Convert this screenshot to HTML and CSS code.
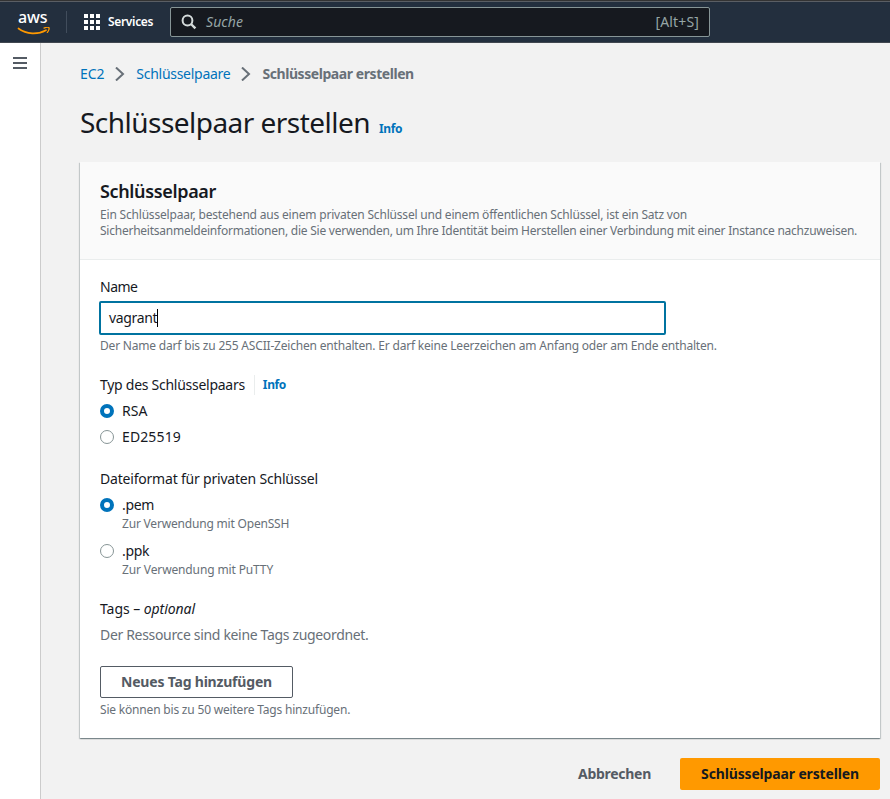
FILE: index.html
```
<!DOCTYPE html>
<html lang="de">
<head>
<meta charset="utf-8">
<title>Schlüsselpaar erstellen</title>
<link rel="stylesheet" href="styles.css">
</head>
<body>
<header class="topbar">
  <div class="logo">
    <span class="logo-text">aws</span>
    <svg viewBox="0 0 34 8" width="34" height="8" fill="none" stroke="#f90" stroke-linecap="round" stroke-linejoin="round">
      <path d="M1.500 1.500c8 6 19.500 6.200 27.500 1.700" stroke-width="1.700"/>
      <path d="M27 1.100c2-.8 4.600-.9 5-.3.400.8-.3 3.300-1.700 4.600" stroke-width="1.300"/>
    </svg>
  </div>
  <span class="divider"></span>
  <svg class="grid" viewBox="0 0 16 16" width="16" height="16" fill="#fff">
    <path d="M0 0h4v4H0zM6 0h4v4H6zM12 0h4v4h-4zM0 6h4v4H0zM6 6h4v4H6zM12 6h4v4h-4zM0 12h4v4H0zM6 12h4v4H6zM12 12h4v4h-4z"/>
  </svg>
  <span class="services">Services</span>
  <div class="search">
    <svg viewBox="0 0 16 16" width="16" height="16" fill="none" stroke="#d5dbdb">
      <circle cx="6.500" cy="6.500" r="4.900" stroke-width="2"/>
      <path d="M10 10l4.400 4.400" stroke-width="2.400"/>
    </svg>
    <em>Suche</em>
    <span class="shortcut">[Alt+S]</span>
  </div>
</header>
<div class="layout">
  <nav class="side">
    <svg viewBox="0 0 14 12" width="14" height="12" fill="#545b64"><path d="M0 0h14v2H0zM0 5h14v2H0zM0 10h14v2H0z"/></svg>
  </nav>
  <main class="content">
    <div class="crumbs">
      <a class="crumb-root">EC2</a>
      <svg viewBox="0 0 10 14" width="10" height="14"><path d="M1 .5l7 6.500-7 6.500"/></svg>
      <a class="crumb-parent">Schlüsselpaare</a>
      <svg viewBox="0 0 10 14" width="10" height="14"><path d="M1 .5l7 6.500-7 6.500"/></svg>
      <b>Schlüsselpaar erstellen</b>
    </div>
    <div class="title">
      <h1>Schlüsselpaar erstellen</h1>
      <a class="info">Info</a>
    </div>
    <section class="card">
      <div class="card-head">
        <h2>Schlüsselpaar</h2>
        <p class="small">Ein Schlüsselpaar, bestehend aus einem privaten Schlüssel und einem öffentlichen Schlüssel, ist ein Satz von</p>
        <p class="small desc-long">Sicherheitsanmeldeinformationen, die Sie verwenden, um Ihre Identität beim Herstellen einer Verbindung mit einer Instance nachzuweisen.</p>
      </div>
      <div class="card-body">
        <div class="label name">Name</div>
        <div class="input"><span>vagrant</span><i class="caret"></i></div>
        <p class="small">Der Name darf bis zu 255 ASCII-Zeichen enthalten. Er darf keine Leerzeichen am Anfang oder am Ende enthalten.</p>
        <div class="group">
          <div class="label type"><span>Typ des Schlüsselpaars</span><a class="info split">Info</a></div>
          <div class="option"><i class="radio on"></i><span>RSA</span></div>
          <div class="option"><i class="radio"></i><span class="wide">ED25519</span></div>
        </div>
        <div class="group">
          <div class="label">Dateiformat für privaten Schlüssel</div>
          <div class="option"><i class="radio on"></i><span class="tight">.pem</span></div>
          <p class="small sub">Zur Verwendung mit OpenSSH</p>
          <div class="option second"><i class="radio"></i><span class="tight">.ppk</span></div>
          <p class="small sub sub-ppk">Zur Verwendung mit PuTTY</p>
        </div>
        <div class="group">
          <div class="label tags"><span>Tags – <em>optional</em></span></div>
          <div class="empty">Der Ressource sind keine Tags zugeordnet.</div>
          <button class="btn add">Neues Tag hinzufügen</button>
          <p class="small">Sie können bis zu 50 weitere Tags hinzufügen.</p>
        </div>
      </div>
    </section>
    <div class="actions">
      <button class="btn cancel">Abbrechen</button>
      <button class="btn primary">Schlüsselpaar erstellen</button>
    </div>
  </main>
</div>
</body>
</html>
```
FILE: styles.css
```
* { box-sizing: border-box; }
body { margin: 0; height: 799px; overflow: hidden; background: #f2f2f2; color: #16191f; font: 14px/22px "Noto Sans", sans-serif; }
h1, h2, p { margin: 0; font-weight: 400; }
a { color: #0073bb; }
svg { display: block; flex: none; }
.topbar { display: flex; align-items: center; height: 43px; padding-top: 1px; background: #232f3e; border-top: 1px solid #333; border-bottom: 1px solid #414750; box-shadow: inset 0 1px #5a5e64; }
.logo { width: 34px; margin-left: 17px; }
.logo-text { display: block; height: 17px; padding-left: 1px; color: #fff; font-size: 16px; font-weight: 500; line-height: 15px; letter-spacing: -.1px; }
.divider { width: 1px; height: 22px; margin: 0 17px 0 15px; background: #414d5c; }
.services { width: 70px; padding-left: 8px; color: #fff; font-size: 12px; font-weight: 600; letter-spacing: -.33px; white-space: nowrap; }
.search { display: flex; align-items: center; width: 540px; height: 30px; padding: 0 10px; background: #16191f; border: 1px solid #879596; border-radius: 2px; color: #95a5a6; }
.search em { margin-left: 9px; letter-spacing: .08px; }
.shortcut { margin-left: auto; letter-spacing: .15px; }
.layout { display: flex; height: 756px; }
.side { flex: none; width: 41px; padding: 14px 13px; background: #fff; border-right: 1px solid #ccc; }
.content { flex: 1; min-width: 0; padding: 20px 10px 0 39px; }
.crumbs { display: flex; align-items: center; height: 22px; white-space: nowrap; }
.crumbs svg { margin: 0 11px; fill: none; stroke: #687078; stroke-width: 2; }
.crumb-root { letter-spacing: -.1px; }
.crumb-parent { letter-spacing: -.28px; }
.crumbs b { color: #687078; font-weight: 700; letter-spacing: -.43px; }
.title { display: flex; align-items: baseline; height: 36px; margin-top: 19px; line-height: 36px; white-space: nowrap; }
h1 { font-size: 28px; letter-spacing: -.53px; }
.info { margin-left: 9px; font-size: 12px; font-weight: 700; letter-spacing: -.4px; }
.card { margin-top: 22px; height: 576px; background: #fff; box-shadow: 0 1px 1px rgba(0,28,36,.3), 1px 1px 1px rgba(0,28,36,.15), -1px 1px 1px rgba(0,28,36,.15); }
.card-head { height: 98px; padding: 18px 20px 0; background: #fafafa; border-bottom: 1px solid #eaeded; }
h2 { height: 27px; line-height: 22px; font-size: 18px; font-weight: 600; letter-spacing: -.35px; }
.small { font-size: 12px; line-height: 16px; color: #687078; letter-spacing: -.19px; white-space: nowrap; }
.desc-long { letter-spacing: -.24px; }
.card-body { padding: 16px 20px 0; }
.input { display: flex; align-items: center; width: 567px; height: 34px; margin: 3px 0 3px -1px; padding: 0 8px; border: 2px solid #0073a0; border-radius: 2px; letter-spacing: -.35px; }
.caret { width: 1px; height: 18px; background: #000; }
.group { margin-top: 20px; }
.label { display: flex; height: 22px; letter-spacing: -.2px; white-space: nowrap; }
.name { letter-spacing: -.5px; }
.type { letter-spacing: -.27px; }
.tags { letter-spacing: -.06px; }
.split { height: 20px; margin-top: 1px; line-height: 20px; border-left: 1px solid #eaeded; padding-left: 8px; }
.option { display: flex; align-items: center; gap: 8px; height: 22px; margin-top: 4px; }
.second { margin-top: 8px; }
.wide { letter-spacing: .12px; }
.tight { letter-spacing: -.3px; }
.radio { width: 14px; height: 14px; border: 1px solid #879596; border-radius: 50%; }
.radio.on { border: 4px solid #0073bb; }
.sub { padding-left: 22px; }
.sub-ppk { letter-spacing: -.13px; }
.empty { margin-top: 4px; color: #687078; letter-spacing: -.33px; }
.btn { display: flex; align-items: center; justify-content: center; height: 32px; padding: 0; border: 0; border-radius: 2px; background: none; color: #545b64; font: 700 14px/20px "Noto Sans", sans-serif; white-space: nowrap; }
.add { width: 193px; margin: 20px 0 4px; border: 1px solid #545b64; letter-spacing: -.2px; }
.actions { display: flex; justify-content: flex-end; margin-top: 20px; }
.cancel { width: 131px; letter-spacing: -.28px; }
.primary { width: 200px; background: #ff9900; color: #16191f; letter-spacing: -.15px; }
```
